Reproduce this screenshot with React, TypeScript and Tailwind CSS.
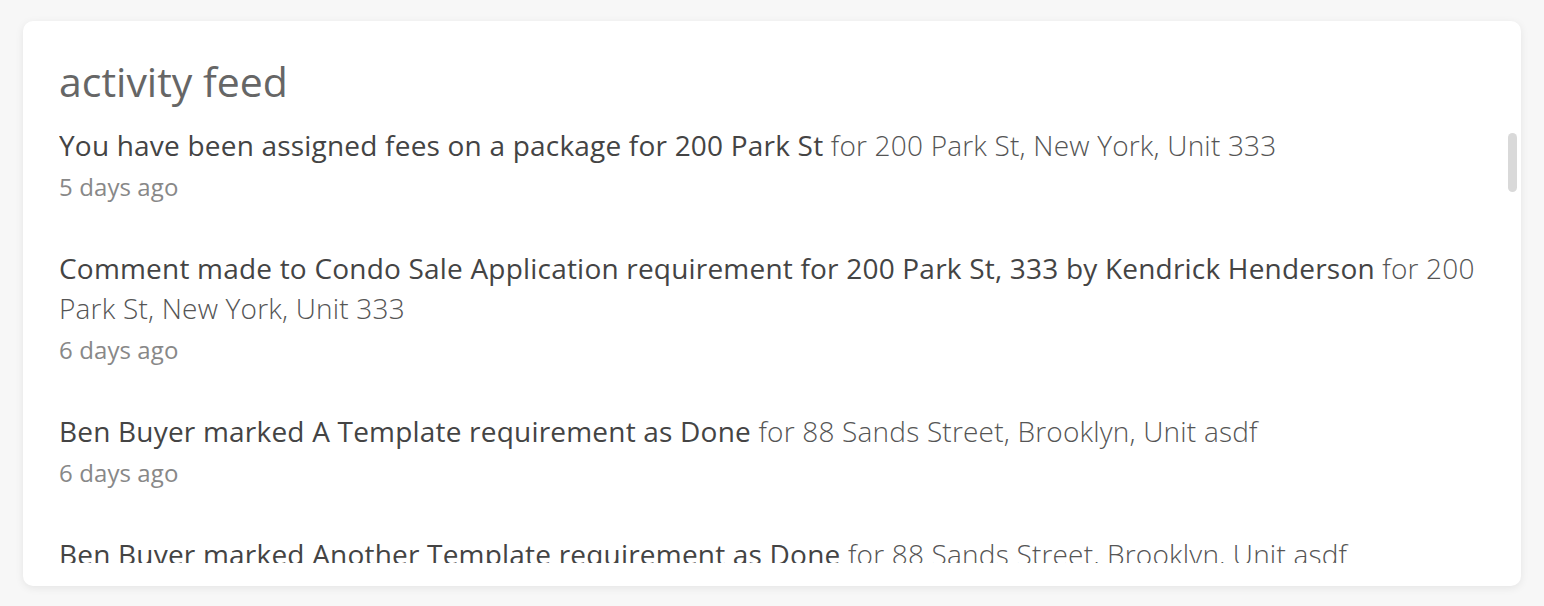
import React from 'react';

type Item = { action: string; place: string; when: string };

const items: Item[] = [
  { action: 'You have been assigned fees on a package for 200 Park St', place: 'for 200 Park St, New York, Unit 333', when: '5 days ago' },
  { action: 'Comment made to Condo Sale Application requirement for 200 Park St, 333 by Kendrick Henderson', place: 'for 200 Park St, New York, Unit 333', when: '6 days ago' },
  { action: 'Ben Buyer marked A Template requirement as Done', place: 'for 88 Sands Street, Brooklyn, Unit asdf', when: '6 days ago' },
  { action: 'Ben Buyer marked Another Template requirement as Done', place: 'for 88 Sands Street, Brooklyn, Unit asdf', when: '6 days ago' },
  { action: 'Ben Buyer uploaded a document to Condo Sale Application', place: 'for 88 Sands Street, Brooklyn, Unit asdf', when: '7 days ago' },
  { action: 'Kendrick Henderson created a package for 200 Park St', place: 'for 200 Park St, New York, Unit 333', when: '8 days ago' },
];

function FeedItem({ item }: { item: Item }) {
  return (
    <li className="mb-[45px]">
      <p className="text-[28px] leading-[40px] tracking-[0.2px] text-[#444]">
        <span className="font-normal">{item.action}</span>{' '}
        <span className="font-light text-[#555]">{item.place}</span>
      </p>
      <p className="mt-[5px] text-[24px] leading-[33px] tracking-[0.1px] text-[#888]">{item.when}</p>
    </li>
  );
}

export default function App() {
  return (
    <div className="min-h-screen bg-[#f7f7f7] px-[23px] pt-[21px] font-['Open_Sans','Liberation_Sans',sans-serif]">
      <div className="relative flex h-[565px] flex-col rounded-[10px] bg-white pl-[36px] pr-[4px] pt-[39px] pb-[23px] shadow-[0_2px_8px_rgba(0,0,0,0.08)]">
        <h2 className="text-[41px] font-medium leading-[43px] text-[#666]">activity feed</h2>
        <div className="mt-[22px] min-h-0 flex-1 overflow-hidden pr-[40px]">
          <ul>
            {items.map((item, i) => (
              <FeedItem key={i} item={item} />
            ))}
          </ul>
        </div>
        {/* scrollbar thumb */}
        <div className="absolute right-[4px] top-[112px] h-[59px] w-[9px] rounded-full bg-[#d9d9d9]" />
      </div>
    </div>
  );
}
